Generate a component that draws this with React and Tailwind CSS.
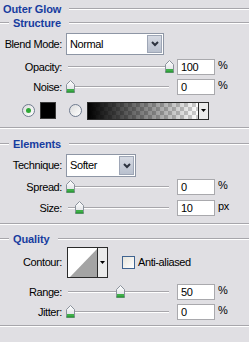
const font = { fontFamily: '"Liberation Sans", Arial, sans-serif' };

const Line = ({ className = '' }) => (
  <div className={`h-[2px] border-t border-[#a7a6ab] border-b border-b-white ${className}`}></div>
);

const SectionHeader = ({ title, first, className = '' }) => (
  <div className={`flex items-center font-bold text-[#173c9f] tracking-[-0.1px] ${className}`}>
    {first ? (
      <span className="pl-[3px]">{title}</span>
    ) : (
      <>
        <Line className="w-[9px]" />
        <span className="ml-[4px]">{title}</span>
      </>
    )}
    <Line className="flex-1 ml-[8px]" />
  </div>
);

const Thumb = () => (
  <svg width="9" height="13" viewBox="0 0 9 13">
    <defs>
      <linearGradient id="tg" x1="0" y1="0" x2="0" y2="1">
        <stop offset="0" stopColor="#ffffff" />
        <stop offset="1" stopColor="#d9dbe0" />
      </linearGradient>
    </defs>
    <path d="M0.5 4.5 L4.5 0.5 L8.5 4.5 V12.5 H0.5 Z" fill="url(#tg)" stroke="#8b929c" />
    <rect x="1" y="9" width="7" height="3" fill="#3fae49" />
    <rect x="0.5" y="11.5" width="8" height="1" fill="#1f8f2a" />
  </svg>
);

const Label = ({ children }) => (
  <div className="w-[62px] text-right shrink-0">{children}</div>
);

const Input = ({ value }) => (
  <div className="w-[38px] h-[16px] bg-white border border-[#a9a9ad] pl-[3px] flex items-center leading-none">
    {value}
  </div>
);

const SliderRow = ({ label, value, unit, pct, className = '' }) => (
  <div className={`flex items-center h-[16px] ${className}`}>
    <Label>{label}</Label>
    <div className="relative w-[105px] h-[16px] ml-[4px]">
      <div className="absolute left-[2px] right-[2px] top-[7px] h-[2px] border-t border-[#a7a6ab] border-b border-b-white"></div>
      <div className="absolute top-[1px]" style={{ left: `${pct * 99}px` }}>
        <Thumb />
      </div>
    </div>
    <div className="ml-[6px]">
      <Input value={value} />
    </div>
    <span className="ml-[3px] -mt-[3px]">{unit}</span>
  </div>
);

const Chevron = () => (
  <svg width="8" height="6" viewBox="0 0 8 6">
    <path d="M1 1 L4 4 L7 1" fill="none" stroke="#2d3340" strokeWidth="2" />
  </svg>
);

const Select = ({ value, width, height }) => (
  <div
    className={`flex items-stretch bg-white border border-[#8e96a5] p-[1px] ${width} ${height}`}
  >
    <div className="flex-1 flex items-center pl-[2px]">{value}</div>
    <div className="w-[15px] flex items-center justify-center bg-gradient-to-b from-[#d6dae3] to-[#b9c0ce] border border-[#9ea6b6]">
      <Chevron />
    </div>
  </div>
);

const Radio = ({ checked }) => (
  <div className="w-[13px] h-[13px] rounded-full border border-[#6f7b8f] bg-gradient-to-br from-[#dcdcdc] to-white flex items-center justify-center">
    {checked && <div className="w-[5px] h-[5px] rounded-full bg-[#2ea836]"></div>}
  </div>
);

const DropStrip = () => (
  <div className="flex-1 border-l border-[#2b2b2b] bg-[#ebebeb] flex items-center justify-center">
    <svg width="5" height="3" viewBox="0 0 5 3">
      <path d="M0 0 H5 L2.5 3 Z" fill="#000" />
    </svg>
  </div>
);

const GradientBox = () => (
  <div className="w-[122px] h-[18px] border border-[#2b2b2b] flex bg-white">
    <svg width="110" height="16" viewBox="0 0 110 16" className="block">
      <defs>
        <pattern id="chk" width="8" height="8" patternUnits="userSpaceOnUse">
          <rect width="8" height="8" fill="#ffffff" />
          <rect width="4" height="4" fill="#cfcfcf" />
          <rect x="4" y="4" width="4" height="4" fill="#cfcfcf" />
        </pattern>
        <linearGradient id="fade" x1="0" y1="0" x2="1" y2="0">
          <stop offset="0" stopColor="#000" stopOpacity="1" />
          <stop offset="1" stopColor="#000" stopOpacity="0" />
        </linearGradient>
      </defs>
      <rect width="110" height="16" fill="url(#chk)" />
      <rect width="110" height="16" fill="url(#fade)" />
    </svg>
    <DropStrip />
  </div>
);

const ContourBox = () => (
  <div className="w-[41px] h-[31px] border border-[#2b2b2b] flex bg-white">
    <svg width="29" height="29" viewBox="0 0 29 29" className="block">
      <rect width="29" height="29" fill="#ffffff" />
      <path d="M2 29 L29 1 V29 Z" fill="#a4a4a4" />
    </svg>
    <DropStrip />
  </div>
);

export default function App() {
  return (
    <div
      className="w-[249px] h-[342px] bg-[#e0dfe3] overflow-hidden text-[11px] text-black tracking-[-0.4px]"
      style={font}
    >
      {/* Outer Glow */}
      <SectionHeader title="Outer Glow" first className="h-[18px]" />
      <SectionHeader title="Structure" className="h-[10px]" />

      <div className="flex items-center mt-[5px]">
        <Label>Blend Mode:</Label>
        <div className="ml-[4px]">
          <Select value="Normal" width="w-[98px]" height="h-[22px]" />
        </div>
      </div>

      <SliderRow label="Opacity:" value="100" unit="%" pct={1} className="mt-[4px]" />
      <SliderRow label="Noise:" value="0" unit="%" pct={0} className="mt-[4px]" />

      <div className="flex items-center h-[17px] mt-[7px]">
        <div className="ml-[22px]">
          <Radio checked />
        </div>
        <div className="ml-[5px] w-[16px] h-[17px] bg-black border border-[#3a3a3a]"></div>
        <div className="ml-[13px]">
          <Radio />
        </div>
        <div className="ml-[5px]">
          <GradientBox />
        </div>
      </div>

      <Line className="mt-[8px]" />

      {/* Elements */}
      <SectionHeader title="Elements" className="h-[12px] mt-[9px]" />

      <div className="flex items-center mt-[4px]">
        <Label>Technique:</Label>
        <div className="ml-[4px]">
          <Select value="Softer" width="w-[70px]" height="h-[23px]" />
        </div>
      </div>

      <SliderRow label="Spread:" value="0" unit="%" pct={0} className="mt-[2px]" />
      <SliderRow label="Size:" value="10" unit="px" pct={0.09} className="mt-[5px]" />

      <Line className="mt-[7px]" />

      {/* Quality */}
      <SectionHeader title="Quality" className="h-[12px] mt-[8px]" />

      <div className="flex items-center mt-[2px] h-[31px]">
        <Label>Contour:</Label>
        <div className="ml-[5px]">
          <ContourBox />
        </div>
        <div className="ml-[14px] w-[13px] h-[13px] border border-[#3f6390] bg-gradient-to-br from-[#e6e4dc] to-white"></div>
        <span className="ml-[3px]">Anti-aliased</span>
      </div>

      <SliderRow label="Range:" value="50" unit="%" pct={0.5} className="mt-[6px]" />
      <SliderRow label="Jitter:" value="0" unit="%" pct={0} className="mt-[4px]" />

      <Line className="mt-[5px]" />
    </div>
  );
}
